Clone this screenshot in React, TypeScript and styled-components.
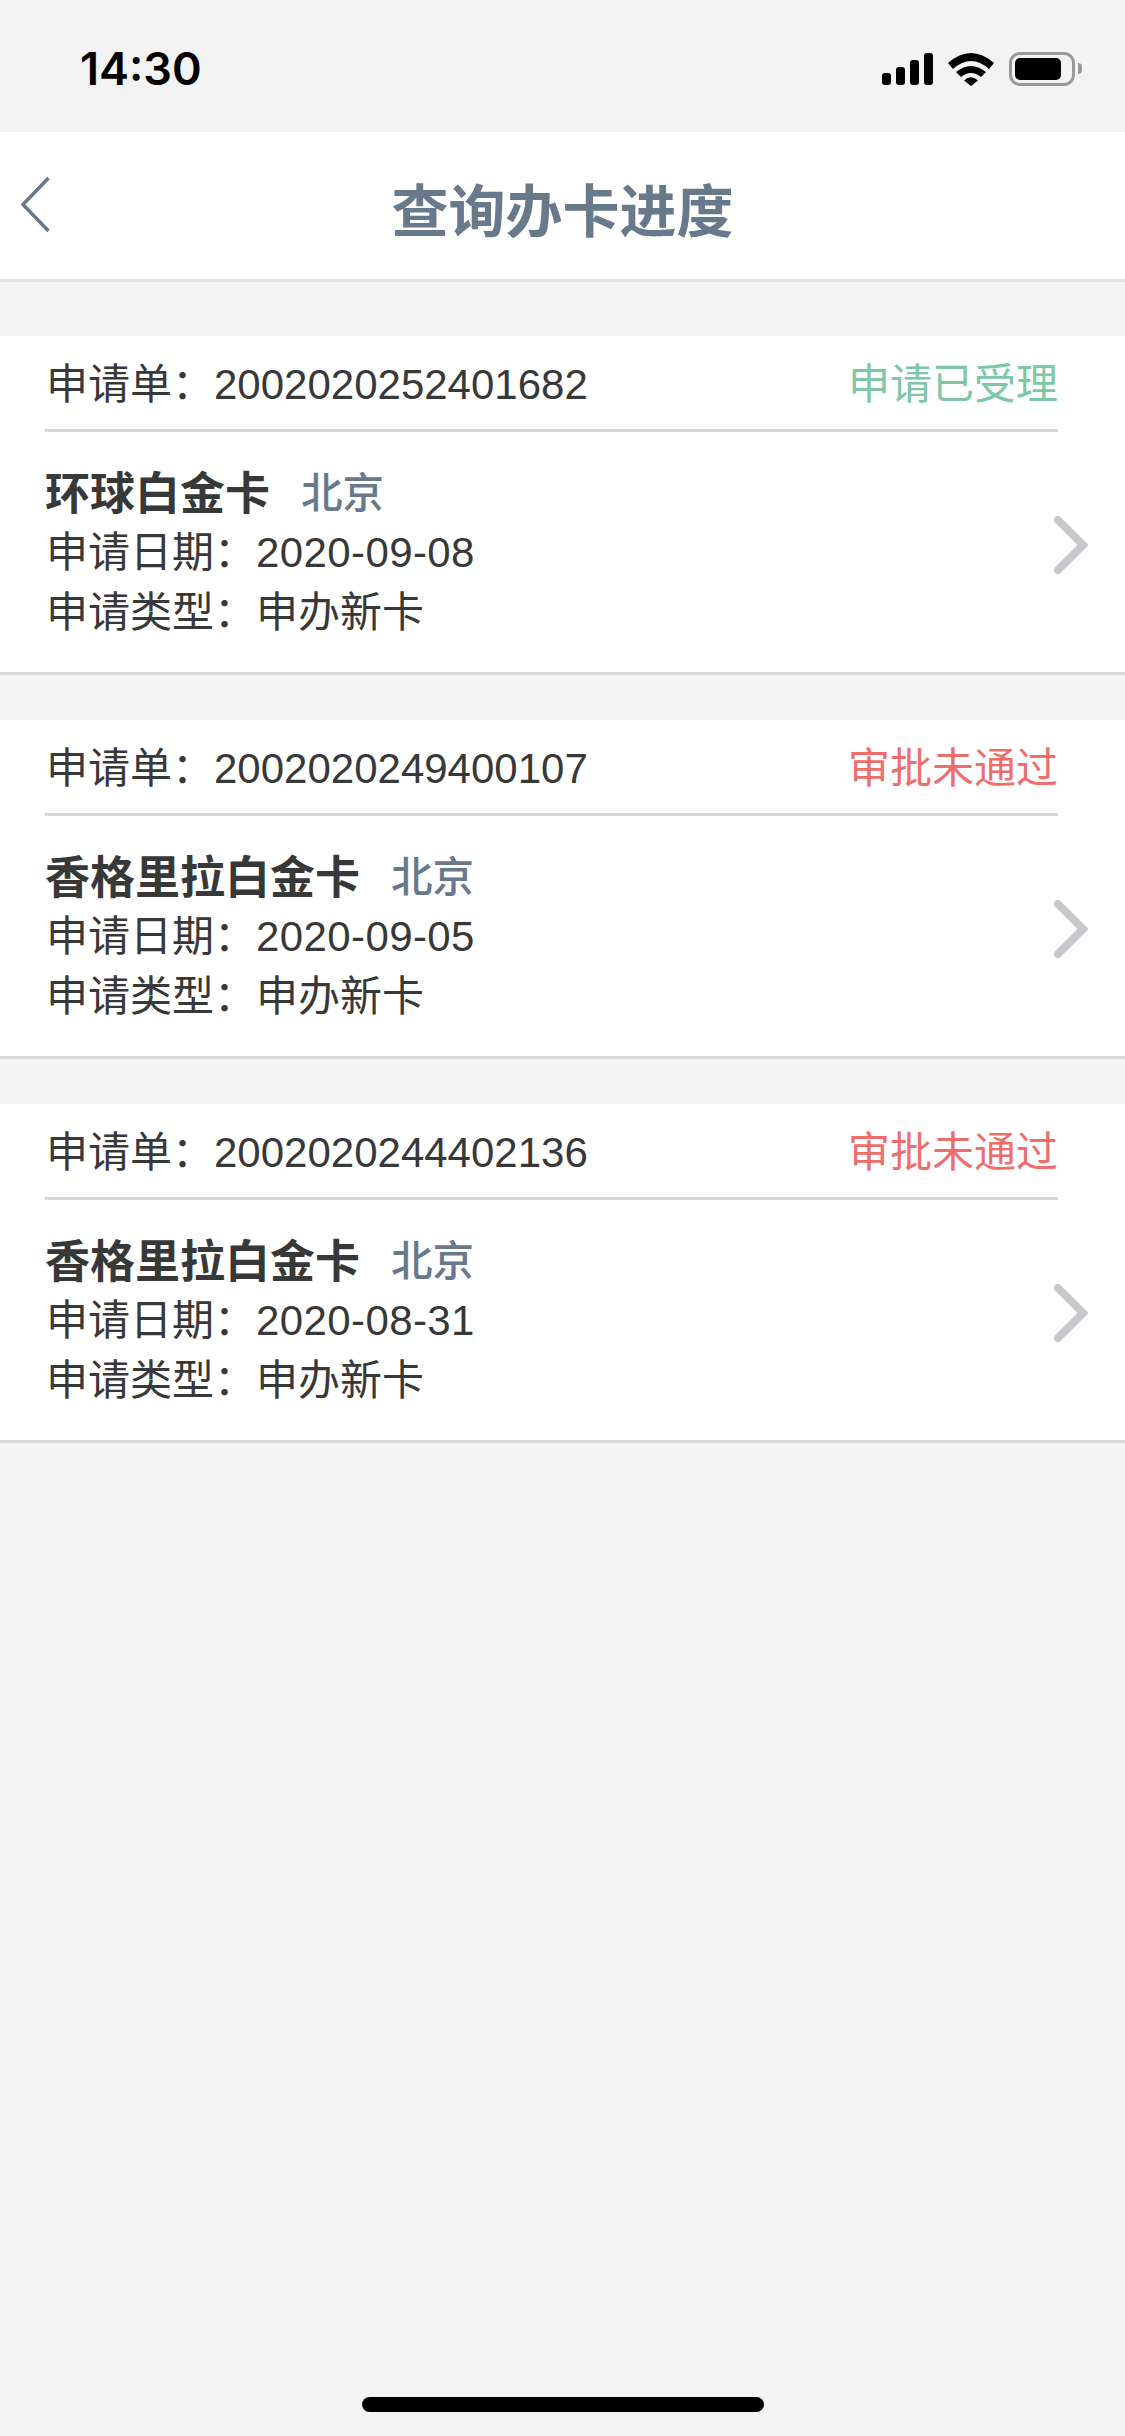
import React from 'react';
import styled, { createGlobalStyle } from 'styled-components';

const GlobalStyle = createGlobalStyle`
  html, body {
    margin: 0;
    padding: 0;
    background-color: #f3f3f3;
  }
`;

const applications = [
  { id: '2002020252401682', status: '申请已受理', approved: true, card: '环球白金卡', city: '北京', date: '2020-09-08' },
  { id: '2002020249400107', status: '审批未通过', approved: false, card: '香格里拉白金卡', city: '北京', date: '2020-09-05' },
  { id: '2002020244402136', status: '审批未通过', approved: false, card: '香格里拉白金卡', city: '北京', date: '2020-08-31' },
];

function App() {
  return (
    <Page>
      <GlobalStyle />
      <StatusBar>
        <Clock>14:30</Clock>
        <StatusIcons>
          <svg width="51" height="32" viewBox="0 0 51 32">
            <rect x="0" y="20" width="9" height="12" rx="3" />
            <rect x="14" y="14" width="9" height="18" rx="3" />
            <rect x="28" y="7" width="9" height="25" rx="3" />
            <rect x="42" y="0" width="9" height="32" rx="3" />
          </svg>
          <svg width="46" height="33" viewBox="0 0 46 33">
            <path d="M0 10Q23 -10 46 10L41 16Q23 0 5 16Z" />
            <path d="M8 19Q23 7 38 19L33 24Q23 16 13 24Z" />
            <path d="M16 27.5Q23 21 30 27.5L23 33Z" />
          </svg>
          <Battery>
            <BatteryFill />
          </Battery>
        </StatusIcons>
      </StatusBar>
      <NavBar>
        <BackButton>
          <svg width="31" height="57" viewBox="0 0 31 57" fill="none">
            <path d="M28.5 2L3 28.5L28.5 55" stroke="#67798a" strokeWidth="3.5" />
          </svg>
        </BackButton>
        <Title>查询办卡进度</Title>
      </NavBar>
      <List>
        {applications.map((item) => (
          <Card key={item.id}>
            <CardHeader>
              <HeaderText>
                申请单：<Digits>{item.id}</Digits>
              </HeaderText>
              <Status $approved={item.approved}>{item.status}</Status>
            </CardHeader>
            <CardBody>
              <Info>
                <NameRow>
                  <CardName>{item.card}</CardName>
                  <City>{item.city}</City>
                </NameRow>
                <InfoRow>
                  申请日期：<DateDigits>{item.date}</DateDigits>
                </InfoRow>
                <InfoRow>申请类型：申办新卡</InfoRow>
              </Info>
              <Chevron width="36" height="58" viewBox="0 0 36 58" fill="none">
                <path d="M4 4L29 29L4 54" stroke="#c8c7cc" strokeWidth="8" strokeLinecap="round" />
              </Chevron>
            </CardBody>
          </Card>
        ))}
      </List>
      <HomeIndicator />
    </Page>
  );
}

const Page = styled.div`
  display: flex;
  flex-direction: column;
  height: 2436px;
  overflow: hidden;
  background-color: #f3f3f3;
  font-family: 'Liberation Sans', 'Noto Sans CJK SC', sans-serif;
  color: #383838;
`;

const StatusBar = styled.div`
  display: flex;
  justify-content: space-between;
  align-items: flex-start;
  box-sizing: border-box;
  height: 132px;
  padding: 52px 50px 0 80px;
`;

const Clock = styled.span`
  font-family: Inter, sans-serif;
  font-size: 45px;
  font-weight: 600;
  line-height: 34px;
  color: #000;
`;

const StatusIcons = styled.div`
  display: flex;
  align-items: center;
  gap: 15px;
`;

const Battery = styled.div`
  position: relative;
  box-sizing: border-box;
  width: 66px;
  height: 34px;
  padding: 3px 11px 3px 3px;
  border: 3px solid #999;
  border-radius: 11px;

  &::after {
    content: '';
    position: absolute;
    top: 8px;
    right: -10px;
    width: 4px;
    height: 11px;
    border-radius: 0 4px 4px 0;
    background-color: #999;
  }
`;

const BatteryFill = styled.div`
  height: 100%;
  border-radius: 5px;
  background-color: #000;
`;

const NavBar = styled.div`
  position: relative;
  display: flex;
  justify-content: center;
  align-items: center;
  box-sizing: border-box;
  height: 150px;
  padding-top: 3px;
  background-color: #fff;
  border-bottom: 3px solid #dde3e8;
`;

const BackButton = styled.div`
  position: absolute;
  left: 20px;
  top: 44px;
  display: flex;
`;

const Title = styled.h1`
  margin: 0;
  font-size: 57px;
  font-weight: 700;
  color: #67798a;
`;

const List = styled.div`
  display: flex;
  flex-direction: column;
  gap: 45px;
  padding-top: 54px;
`;

const Card = styled.div`
  background-color: #fff;
  border-bottom: 3px solid #d9d9d9;
`;

const CardHeader = styled.div`
  display: flex;
  justify-content: space-between;
  align-items: center;
  height: 88px;
  margin: 0 67px 0 45px;
  padding: 5px 0 0 1px;
  border-bottom: 3px solid #d9d9d9;
`;

const HeaderText = styled.div`
  font-size: 42px;
  line-height: 48px;
`;

const Digits = styled.span`
  font-size: 42px;
`;

const DateDigits = styled(Digits)`
  letter-spacing: 0.4px;
`;

const Status = styled.div<{ $approved: boolean }>`
  font-size: 42px;
  line-height: 48px;
  color: ${(props) => (props.$approved ? '#7cc8a4' : '#ee6e6c')};
`;

const CardBody = styled.div`
  display: flex;
  justify-content: space-between;
  align-items: center;
  box-sizing: border-box;
  height: 240px;
  padding: 0 36px 0 45px;
`;

const Info = styled.div`
  display: flex;
  flex-direction: column;
  padding-top: 1px;
`;

const NameRow = styled.div`
  display: flex;
  align-items: center;
  gap: 31px;
  height: 55px;
  margin-bottom: 5px;
`;

const CardName = styled.span`
  font-size: 45px;
  font-weight: 700;
`;

const City = styled.span`
  font-size: 41.5px;
  font-weight: 500;
  color: #67798a;
`;

const InfoRow = styled.div`
  padding-left: 1px;
  font-size: 42px;
  line-height: 60px;
`;

const Chevron = styled.svg`
  margin: 0 -1px 14px 0;
`;

const HomeIndicator = styled.div`
  align-self: center;
  width: 402px;
  height: 15px;
  margin-top: auto;
  margin-bottom: 24px;
  border-radius: 8px;
  background-color: #000;
`;

export default App;
